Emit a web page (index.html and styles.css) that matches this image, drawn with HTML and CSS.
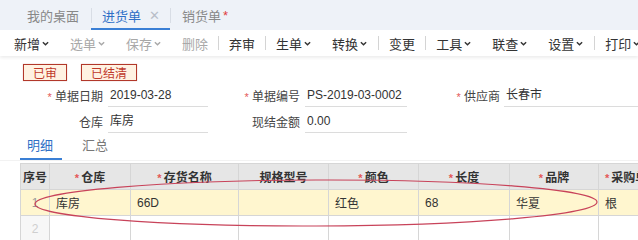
FILE: index.html
```html
<!DOCTYPE html>
<html>
<head>
    <meta charset="UTF-8">
    <title>进货单</title>
    <link rel="stylesheet" href="styles.css">
</head>
<body>
<div class="tabbar">
    <div class="tab">我的桌面</div>
    <div class="tab active">进货单 <span class="close">&#x2715;</span></div>
    <div class="tab">销货单 <span class="dirty">*</span></div>
</div>

<div class="toolbar">
    <div class="tool">新增<svg class="caret" viewBox="0 0 8 5"><polyline points="1,1 4,4 7,1"/></svg></div>
    <div class="tool off">选单<svg class="caret" viewBox="0 0 8 5"><polyline points="1,1 4,4 7,1"/></svg></div>
    <div class="tool off">保存<svg class="caret" viewBox="0 0 8 5"><polyline points="1,1 4,4 7,1"/></svg></div>
    <div class="tool off">删除</div>
    <div class="sep"></div>
    <div class="tool">弃审</div>
    <div class="sep"></div>
    <div class="tool">生单<svg class="caret" viewBox="0 0 8 5"><polyline points="1,1 4,4 7,1"/></svg></div>
    <div class="tool">转换<svg class="caret" viewBox="0 0 8 5"><polyline points="1,1 4,4 7,1"/></svg></div>
    <div class="sep"></div>
    <div class="tool">变更</div>
    <div class="sep"></div>
    <div class="tool">工具<svg class="caret" viewBox="0 0 8 5"><polyline points="1,1 4,4 7,1"/></svg></div>
    <div class="tool">联查<svg class="caret" viewBox="0 0 8 5"><polyline points="1,1 4,4 7,1"/></svg></div>
    <div class="tool">设置<svg class="caret" viewBox="0 0 8 5"><polyline points="1,1 4,4 7,1"/></svg></div>
    <div class="sep"></div>
    <div class="tool">打印<svg class="caret" viewBox="0 0 8 5"><polyline points="1,1 4,4 7,1"/></svg></div>
</div>

<div class="form">
    <div class="badges">
        <span class="badge">已审</span>
        <span class="badge">已结清</span>
    </div>
    <div class="row">
        <div class="field f1"><label><i>*</i> 单据日期</label><div class="input">2019-03-28</div></div>
        <div class="field f2"><label><i>*</i> 单据编号</label><div class="input">PS-2019-03-0002</div></div>
        <div class="field f3"><label><i>*</i> 供应商</label><div class="input">长春市</div></div>
    </div>
    <div class="row">
        <div class="field f1"><label>仓库</label><div class="input">库房</div></div>
        <div class="field f2"><label>现结金额</label><div class="input">0.00</div></div>
    </div>

    <div class="subtabs">
        <div class="subtab active">明细</div>
        <div class="subtab">汇总</div>
    </div>

    <div class="grid-wrap">
        <table class="grid">
            <colgroup>
                <col style="width:29px">
                <col style="width:81px">
                <col style="width:108px">
                <col style="width:90px">
                <col style="width:90px">
                <col style="width:91px">
                <col style="width:89px">
                <col style="width:70px">
            </colgroup>
            <tr>
                <th class="no">序号</th>
                <th><i>*</i>仓库</th>
                <th><i>*</i>存货名称</th>
                <th>规格型号</th>
                <th><i>*</i>颜色</th>
                <th><i>*</i>长度</th>
                <th><i>*</i>品牌</th>
                <th class="last"><i>*</i>采购单位</th>
            </tr>
            <tr class="current">
                <td class="no">1</td>
                <td>库房</td>
                <td>66D</td>
                <td></td>
                <td>红色</td>
                <td>68</td>
                <td>华夏</td>
                <td>根</td>
            </tr>
            <tr>
                <td class="no light">2</td>
                <td></td><td></td><td></td><td></td><td></td><td></td><td></td>
            </tr>
        </table>
        <svg class="mark" viewBox="0 0 638 80" width="638" height="80">
            <ellipse cx="316" cy="41" rx="281" ry="23" transform="rotate(-0.2 316 41)"/>
        </svg>
    </div>
</div>
</body>
</html>
```

FILE: styles.css
```css
body {
    margin: 0;
    width: 638px;
    height: 240px;
    overflow: hidden;
    font-family: "Liberation Sans", "Noto Sans CJK SC", sans-serif;
    font-size: 12px;
    color: #333;
    background-color: #fff;
}
.tabbar {
    height: 30px;
    background-color: #eef2f8;
    display: flex;
    align-items: stretch;
    padding-left: 15px;
    font-size: 13px;
}
.tab {
    display: flex;
    align-items: center;
    padding: 0 12px;
    color: #888;
    position: relative;
}
.tab + .tab::before {
    content: "";
    position: absolute;
    left: 0;
    top: 8px;
    height: 15px;
    border-left: 1px solid #d8dde5;
}
.tab.active {
    color: #2f6fc6;
    padding: 0 10px 0 11px;
    box-shadow: inset 0 -2px 0 #3a7fd5;
}
.tab .close {
    color: #b8bec8;
    font-size: 13px;
    margin-left: 8px;
}
.tab .dirty {
    color: #e03c3c;
    margin-left: 2px;
}
.toolbar {
    height: 26px;
    display: flex;
    align-items: center;
    padding-left: 4px;
    font-size: 13px;
    box-shadow: 0 2px 3px rgba(0,0,0,0.07);
    position: relative;
}
.tool {
    flex-shrink: 0;
    padding: 0 10px;
    display: flex;
    align-items: center;
    white-space: nowrap;
    color: #333;
}
.tool.off {
    color: #a8a8a8;
}
.caret {
    width: 7px;
    height: 5px;
    margin-left: 2px;
    margin-right: 1px;
    fill: none;
    stroke: currentColor;
    stroke-width: 1.6;
}
.sep {
    flex-shrink: 0;
    width: 1px;
    height: 14px;
    background-color: #d4d4d4;
}
.form {
    padding-top: 8px;
}
.badges {
    display: flex;
    gap: 14px;
    padding-left: 23px;
    height: 17px;
}
.badge {
    display: inline-flex;
    align-items: center;
    height: 15px;
    padding: 0 9px;
    border: 1px solid #b2382a;
    background-color: #fff2e2;
    color: #c0392b;
    font-size: 12px;
    box-shadow: 0 0 1px rgba(160,50,30,0.4);
}
.row {
    display: flex;
    height: 26px;
    align-items: flex-end;
}
.field {
    display: flex;
    align-items: center;
}
.field label {
    text-align: right;
    color: #444;
    white-space: nowrap;
}
.field label i, .grid th i {
    font-style: normal;
    color: #e45858;
    font-size: 11px;
}
.grid th i {
    margin-right: 2px;
}
.field .input {
    height: 22px;
    line-height: 22px;
    border-bottom: 1px solid #dcdcdc;
    padding-left: 2px;
    white-space: nowrap;
    color: #333;
}
.f1 label { width: 103px; margin-right: 5px; }
.f1 .input { width: 98px; }
.f2 label { width: 92px; margin-right: 5px; }
.f2 .input { width: 100px; }
.f3 label { width: 93px; margin-right: 4px; }
.f3 .input { width: 134px; }
.subtabs {
    display: flex;
    padding-left: 20px;
    height: 27px;
    font-size: 13px;
    border-bottom: 1px solid #f2f2f2;
}
.subtab {
    padding: 0 7px;
    margin-right: 13px;
    line-height: 26px;
    color: #777;
}
.subtab.active {
    color: #2f6fc6;
    box-shadow: inset 0 -2px 0 #3a7fd5;
    width: 28px;
}
.grid-wrap {
    position: relative;
    margin-top: 2px;
}
.grid {
    margin-left: 20px;
    border-collapse: collapse;
    table-layout: fixed;
    width: 648px;
}
.grid th, .grid td {
    border: 1px solid #d6d6d6;
    height: 25px;
    padding: 0 6px;
    white-space: nowrap;
    overflow: hidden;
}
.grid th {
    background-color: #e6e6e6;
    font-weight: bold;
    color: #333;
    text-align: center;
}
.grid th.last {
    text-align: left;
}
.grid td {
    color: #333;
}
.grid .no {
    padding: 0;
    text-align: center;
}
.grid td.no {
    color: #999;
}
.grid td.light {
    color: #cfcfcf;
    background-color: #f7f7f7;
}
.grid tr.current td {
    background-color: #fff6cf;
}
.mark {
    position: absolute;
    left: 0;
    top: -1px;
    pointer-events: none;
}
.mark ellipse {
    fill: none;
    stroke: #c8435a;
    stroke-width: 1.2;
}
```
